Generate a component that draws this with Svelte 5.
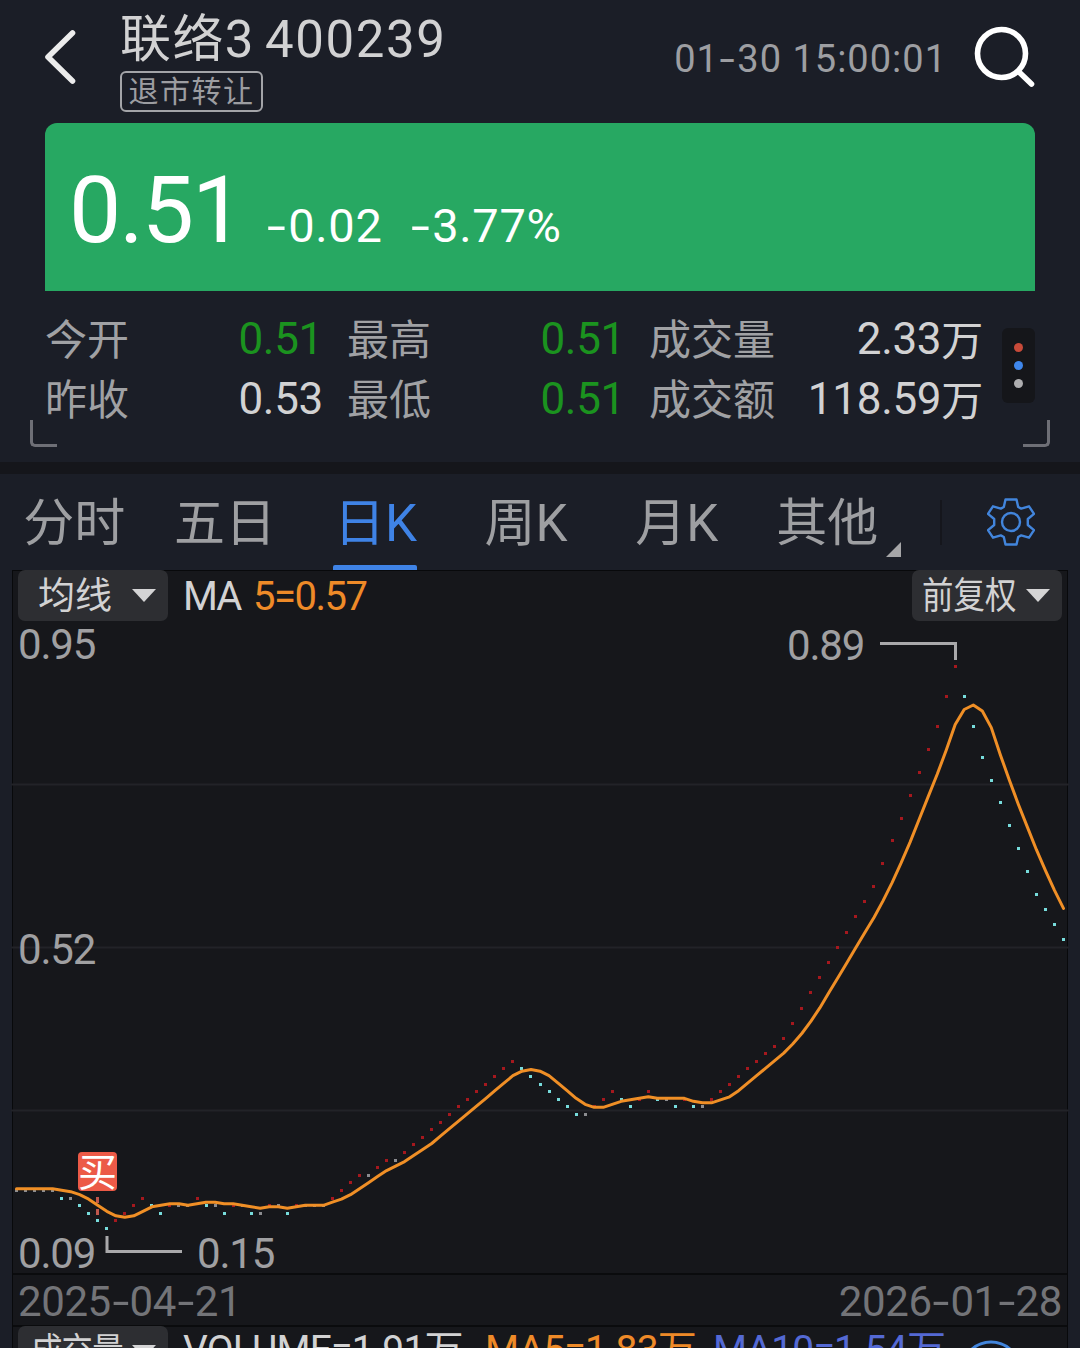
<script>
  // 标签页
  const tabs = ['分时', '五日', '日K', '周K', '月K', '其他'];
  let active = $state('日K');

  // 行情摘要，每一列两行
  const quotes = [
    { label: '今开', value: '0.51', down: true },
    { label: '最高', value: '0.51', down: true },
    { label: '成交量', value: '2.33', unit: '万' },
    { label: '昨收', value: '0.53' },
    { label: '最低', value: '0.51', down: true },
    { label: '成交额', value: '118.59', unit: '万' }
  ];

  // 收盘价（单位：分），前四个只用于计算均线
  const history = [20, 20, 20, 20];
  const closes = [
    20, 20, 20, 20, 20, 19, 19, 18, 17, 16, 15, 16, 17, 18, 19, 18, 17, 18, 18, 18,
    19, 18, 18, 17, 18, 18, 17, 17, 18, 18, 17, 18, 18, 18, 18, 19, 20, 21, 22, 22,
    23, 24, 24, 25, 26, 27, 28, 29, 30, 31, 32, 33, 34, 35, 36, 37, 36, 35, 34, 33,
    32, 31, 30, 30, 31, 32, 33, 32, 31, 32, 33, 32, 32, 31, 32, 31, 31, 32, 33, 34,
    35, 36, 37, 38, 39, 40, 42, 44, 46, 48, 50, 52, 54, 56, 58, 60, 63, 66, 69, 72,
    75, 78, 81, 85, 89, 85, 81, 77, 74, 71, 68, 65, 62, 59, 57, 55, 53
  ];

  // 图表坐标，原点在图表左上角
  const px = (i) => 4.5 + i * 9.026;
  const py = (cents) => 96 + (89 - cents) * 7.6;
  const maY = (cents) => 135 + (84.2 - cents) * 7.534;

  const bars = closes.map((c, i) => {
    const prev = i === 0 ? 20 : closes[i - 1];
    return {
      x: Math.round(px(i) - 1.5),
      y: Math.round(py(c) - 1.5),
      kind: c > prev ? 'up' : c < prev ? 'down' : 'flat'
    };
  });

  const all = [...history, ...closes];
  const ma5 = closes
    .map((_, i) => {
      const sum = all.slice(i, i + 5).reduce((a, b) => a + b, 0);
      return `${px(i).toFixed(1)},${maY(sum / 5).toFixed(1)}`;
    })
    .join(' ');

  // 设置图标：六齿齿轮
  const gear =
    'M18.500 1.500h11l1.700 7.500 3 1.600 7.800-2.300 5 7.500-6.200 5.200v6l6.200 5.200-5 7.500-7.800-2.300-3 1.600-1.700 7.500h-11l-1.700-7.500-3-1.600-7.800 2.300-5-7.500 6.200-5.200v-6l-6.200-5.200 5-7.500 7.800 2.300 3-1.600z';
</script>

<div class="page">
  <header>
    <svg class="back" width="34" height="58" viewBox="0 0 34 58">
      <path d="M29.500 5 5 29l24.500 24" />
    </svg>
    <div class="stock">
      <div class="title"><span class="name">联络3</span><span class="code">400239</span></div>
      <span class="tag">退市转让</span>
    </div>
    <time>01<i>-</i>30 15:00:01</time>
    <svg class="search" width="62" height="62" viewBox="0 0 62 62">
      <circle cx="27.500" cy="27.500" r="24" />
      <path d="M44.500 45.500 57.500 58" />
    </svg>
  </header>

  <section class="price">
    <span class="now">0.51</span>
    <span class="diff"><i>-</i>0.02</span>
    <span class="pct"><i>-</i>3.77%</span>
  </section>

  <section class="summary">
    <div class="quotes">
      {#each quotes as q}
        <span class="label">{q.label}</span>
        <span class="value" class:green={q.down}>{q.value}{#if q.unit}<span class="unit">{q.unit}</span>{/if}</span>
      {/each}
    </div>
    <div class="more"><b></b><b></b><b></b></div>
    <div class="corner left"></div>
    <div class="corner right"></div>
  </section>

  <nav>
    {#each tabs as tab}
      <button class:active={tab === active} onclick={() => (active = tab)}>
        {tab}
        {#if tab === '其他'}<span class="fold"></span>{/if}
      </button>
    {/each}
    <span class="divider"></span>
    <svg class="gear" width="48" height="48" viewBox="0 0 48 48">
      <path d={gear} />
      <circle cx="24" cy="24" r="9" />
    </svg>
  </nav>

  <main>
    <div class="plot">
      <svg class="chart" width="1056" height="703" viewBox="0 0 1056 703">
        <path class="grid" d="M0 214.500H1056M0 377.500H1056M0 540.500H1056" />
        {#each bars as b}
          <rect class={b.kind} x={b.x} y={b.y} width="3" height="3" />
        {/each}
        <path class="buyline" d="M85.500 627V645" />
        <polyline class="ma" points={ma5} />
        <path class="callout" d="M868 73.500H943.500V90M95 666V681.500H170" />
        <g class="axis">
          <text x="6" y="89">0.95</text>
          <text x="6" y="394">0.52</text>
          <text x="6" y="698">0.09</text>
          <text x="775" y="90">0.89</text>
          <text x="185" y="698">0.15</text>
        </g>
        <rect class="buy" x="66" y="582" width="39" height="39" rx="4" />
        <text class="buytext" x="85.500" y="615.500" text-anchor="middle">买</text>
      </svg>
      <div class="toolbar">
        <div class="chip"><span>均线</span><em></em></div>
        <span class="ma-name">MA</span>
        <span class="ma-value">5=0.57</span>
        <div class="chip adjust"><span class="narrow">前复权</span><em></em></div>
      </div>
    </div>
    <div class="dates"><span>2025<i>-</i>04<i>-</i>21</span><span>2026<i>-</i>01<i>-</i>28</span></div>
    <div class="volume">
      <div class="chip"><span class="narrow">成交量</span><em></em></div>
      <span class="v0">VOLUME=1.91万</span>
      <span class="v5">MA5=1.83万</span>
      <span class="v10">MA10=1.54万</span>
      <svg width="62" height="62" viewBox="0 0 62 62"><circle cx="31" cy="31" r="29" /></svg>
    </div>
  </main>
</div>

<style>
  :global(body) {
    background: #1b1e27;
  }

  .page {
    width: 1080px;
    height: 1348px;
    overflow: hidden;
    background: #1b1e27;
    color: #d2d2d3;
    font-family: Roboto, 'Noto Sans CJK SC', sans-serif;
    white-space: nowrap;
  }

  svg {
    display: block;
    fill: none;
    stroke-linecap: round;
    stroke-linejoin: round;
  }

  /* 连字符比字体自带的更宽 */
  i {
    display: inline-block;
    font-style: normal;
    transform: scaleX(1.45);
    margin: 0 0.09em;
  }

  header {
    display: flex;
    height: 123px;
    padding: 0 44px 0 43px;
    box-sizing: border-box;
  }

  .back {
    margin-top: 28px;
    stroke: #ececec;
    stroke-width: 5.6;
  }

  .stock {
    margin-left: 43px;
    flex: 1;
  }

  .title {
    display: flex;
    height: 71px;
    line-height: 79px;
    font-size: 51px;
  }

  .name {
    width: 145px;
    letter-spacing: 1.4px;
  }

  .code {
    letter-spacing: 1.6px;
  }

  .tag {
    display: flex;
    width: 143px;
    height: 41px;
    box-sizing: border-box;
    border: 2px solid #a3a4a8;
    border-radius: 6px;
    justify-content: center;
    align-items: center;
    color: #9c9da1;
    font-size: 30px;
    letter-spacing: 1.5px;
    line-height: 30px;
  }

  time {
    margin: 37px 27px 0 0;
    color: #9d9ea2;
    font-size: 38px;
    line-height: 44px;
    letter-spacing: 1px;
  }

  .search {
    margin-top: 26px;
    stroke: #fff;
    stroke-width: 5.6;
  }

  .price {
    display: flex;
    align-items: baseline;
    height: 168px;
    margin: 0 45px;
    padding: 33px 0 0 24px;
    box-sizing: border-box;
    border-radius: 12px 12px 0 0;
    background: #27a862;
    color: #fff;
  }

  .now {
    width: 197px;
    font-size: 93px;
    line-height: 110px;
    letter-spacing: -2px;
  }

  .diff,
  .pct {
    width: 144px;
    font-size: 47px;
    letter-spacing: 0.7px;
  }

  .summary {
    position: relative;
    display: flex;
    height: 171px;
    padding: 18px 45px 0;
    box-sizing: border-box;
  }

  .quotes {
    display: grid;
    grid-template-columns: 120px 158px 24px 120px 158px 24px 150px 183px;
    grid-template-rows: 60px 60px;
    width: 937px;
    font-size: 42px;
    line-height: 60px;
  }

  .label {
    padding-top: 2px;
    height: 58px;
    color: #a0a1a4;
  }

  .label:nth-child(6n + 3) {
    grid-column: 4;
  }

  .label:nth-child(6n + 5) {
    grid-column: 7;
  }

  .value {
    text-align: right;
    letter-spacing: -0.3px;
    font-size: 44px;
  }

  .unit {
    position: relative;
    top: 2px;
    margin-right: -1px;
    font-size: 42px;
    line-height: 1;
  }

  .green {
    color: #1b931f;
  }

  .more {
    display: flex;
    flex-direction: column;
    justify-content: center;
    align-items: center;
    gap: 9px;
    width: 33px;
    height: 75px;
    margin: 19px 0 0 20px;
    border-radius: 6px;
    background: #15161a;
  }

  .more b {
    width: 9px;
    height: 9px;
    border-radius: 50%;
    background: #c84a39;
  }

  .more b:nth-child(2) {
    background: #3f87ec;
  }

  .more b:nth-child(3) {
    background: #aeaeb0;
  }

  .corner {
    position: absolute;
    top: 129px;
    width: 24px;
    height: 24px;
    border-bottom: 3px solid #6e6f76;
  }

  .corner.left {
    left: 30px;
    border-left: 3px solid #6e6f76;
    border-bottom-left-radius: 5px;
  }

  .corner.right {
    right: 30px;
    border-right: 3px solid #6e6f76;
    border-bottom-right-radius: 5px;
  }

  nav {
    display: flex;
    align-items: center;
    height: 108px;
    box-sizing: border-box;
    border-top: 12px solid #15161b;
  }

  button {
    position: relative;
    width: 150.6px;
    height: 96px;
    padding: 3px 2px 0 0;
    border: 0;
    background: none;
    color: #9e9fa2;
    font-family: inherit;
    font-size: 51px;
    line-height: 93px;
  }

  button.active {
    color: #3f83e6;
  }

  button.active::after {
    content: '';
    position: absolute;
    left: 32px;
    bottom: 0;
    width: 84px;
    height: 5px;
    border-radius: 2px 2px 0 0;
    background: #3f83e6;
  }

  .fold {
    position: absolute;
    right: 3px;
    bottom: 13px;
    border-left: 15px solid transparent;
    border-bottom: 15px solid #a6a6a8;
  }

  .divider {
    width: 2px;
    height: 45px;
    margin-left: 36px;
    background: #15161c;
  }

  .gear {
    margin-left: 45px;
    stroke: #4285dc;
    stroke-width: 2.4;
  }

  main {
    width: 1056px;
    height: 778px;
    margin-left: 12px;
    border: 1px solid #08090b;
    border-bottom: 0;
    box-sizing: border-box;
    background: #16171b;
  }

  .plot {
    position: relative;
    height: 702px;
    border-bottom: 2px solid #0a0b0d;
  }

  .chart {
    position: absolute;
    left: -1px;
    top: -1px;
    overflow: visible;
  }

  .grid {
    stroke: #222328;
    stroke-width: 2;
  }

  .up {
    fill: #a5181e;
  }

  .down {
    fill: #77dcdc;
  }

  .flat {
    fill: #8b8c90;
  }

  .ma {
    stroke: #f08f26;
    stroke-width: 3;
  }

  .buyline {
    stroke: #c0564c;
    stroke-width: 3;
    stroke-linecap: butt;
    stroke-dasharray: 6 6;
  }

  .callout {
    stroke: #a9a9ab;
    stroke-width: 3;
    stroke-linecap: butt;
    stroke-linejoin: miter;
  }

  .axis {
    fill: #a0a0a2;
    font-size: 42px;
    letter-spacing: -1.2px;
  }

  .buy {
    fill: #ec5a47;
  }

  .buytext {
    fill: #fff;
    font-size: 39px;
  }

  .toolbar {
    position: relative;
    display: flex;
    height: 50px;
    padding: 0 5px;
    font-size: 40px;
    line-height: 51px;
  }

  .chip {
    display: flex;
    justify-content: space-between;
    align-items: center;
    width: 150px;
    height: 51px;
    margin-top: -1px;
    padding: 0 12px 0 20px;
    box-sizing: border-box;
    border-radius: 7px;
    background: #2d2e32;
    font-size: 37px;
    line-height: 50px;
  }

  .chip span {
    padding-top: 3px;
  }

  .chip em {
    border: 12px solid transparent;
    border-top: 13px solid #d4d4d5;
    border-bottom: 0;
  }

  .narrow {
    width: 96px;
    transform: scaleX(0.85);
    transform-origin: left;
  }

  .adjust {
    margin-left: auto;
    padding-left: 10px;
  }

  .ma-name {
    width: 70px;
    margin-left: 15px;
    letter-spacing: -2px;
  }

  .ma-value {
    color: #ee8a28;
    letter-spacing: -1.5px;
  }

  .dates {
    display: flex;
    justify-content: space-between;
    height: 50px;
    padding: 0 5px;
    border-bottom: 2px solid #0a0b0d;
    color: #737478;
    font-size: 42px;
    line-height: 54px;
    letter-spacing: -0.4px;
  }

  .volume {
    display: flex;
    padding: 0 5px;
    font-size: 39px;
    line-height: 47px;
    letter-spacing: -0.8px;
  }

  .volume .chip {
    margin: -1px 15px 0 0;
    padding-left: 13px;
    letter-spacing: -1px;
    flex: none;
  }

  .v0 {
    width: 302px;
  }

  .v5 {
    width: 228px;
    color: #ee8a28;
  }

  .v10 {
    width: 247px;
    color: #5469d4;
  }

  .volume svg {
    flex: none;
    margin-top: 13px;
    stroke: #4285dc;
    stroke-width: 3;
  }
</style>
